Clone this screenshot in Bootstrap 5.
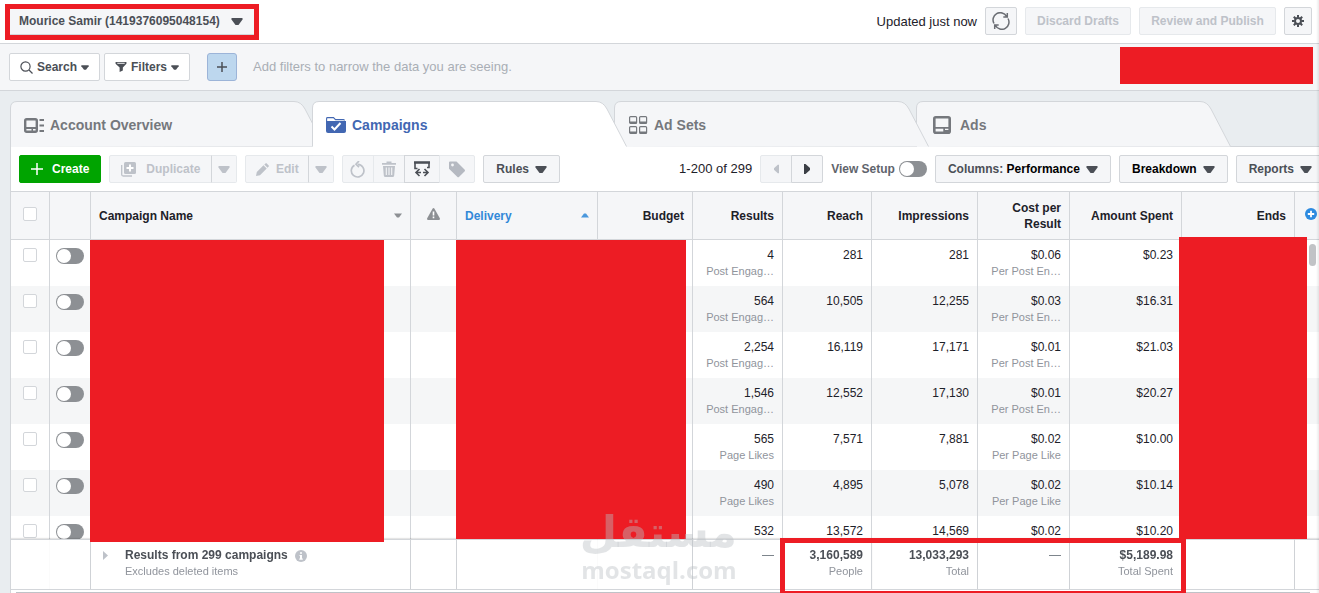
<!DOCTYPE html>
<html lang="en">
<head>
<meta charset="utf-8">
<meta name="viewport" content="width=device-width, initial-scale=1">
<title>Ads Manager - Campaigns</title>
<link href="https://cdn.jsdelivr.net/npm/bootstrap@5.3.0/dist/css/bootstrap.min.css" rel="stylesheet">
<style>
:root{--line:#d3d6da;--soft:#f5f6f8;--ink:#4b4f56;--red:#ed1c24}
body{font:12px/16px "Liberation Sans",Arial,sans-serif;color:#1d2129;background:#e9edf0}
.app{height:100vh;overflow:hidden}
.app::after{content:"";position:fixed;top:0;right:0;bottom:0;width:3px;background:linear-gradient(90deg,transparent,rgba(0,0,0,.08));pointer-events:none;z-index:20}
.fs-13{font-size:13px}
.tool{height:28px;padding:0 12px;font-size:12px;line-height:16px;font-weight:700;color:var(--ink);background:var(--soft);border:1px solid var(--line);border-radius:2px;display:inline-flex;align-items:center;justify-content:center;white-space:nowrap;flex:none}
.tool:hover{background:#ebedf0;border-color:var(--line);color:var(--ink)}
.tool:disabled{color:#bec2c9;background:var(--soft);border-color:#e6e9ec;opacity:1}
.tool svg{flex:none}
.topbar{height:44px;padding:0 7px 0 5px;border-bottom:1px solid var(--line)}
.topbar>.tool{margin-bottom:2px}
.account-pick{border:5px solid var(--red)}
.account-pick .tool{height:26px;padding:0 11px 0 9px;gap:11px;border-width:0 0 1px;border-radius:0}
.icon-only{width:32px;padding:0}
.gear{width:28px;padding:0}
.discard{width:106px}
.publish{width:137px}
.filterbar{height:47px;padding:0 6px 0 9px;background:var(--soft);border-bottom:1px solid var(--line)}
.filterbar .tool{background:#fff;padding:0 10px;gap:4px}
.filterbar .plus{width:30px;padding:0;margin:0 16px 0 13px;background:#bdd7ee;border-color:#9cb4d8;border-radius:3px}
.hint{color:#a9aeb5}
.masked{width:193px;height:37px;background:var(--red);margin-bottom:4px}
.tabs{height:55px;padding:10px 0 0 10px}
.tab-link{position:relative;width:302px;height:45px;padding:3px 0 0 14px;gap:6px;font-size:14px;font-weight:700;color:#75787d;text-decoration:none;display:flex;align-items:center;z-index:1}
.tab-link .shape{position:absolute;left:0;top:0;z-index:-1}
.tab-link.on{z-index:3;color:#4267b2}
.tab-link.mid{z-index:2}
.tab-link.last{padding:2px 0 0 16px;gap:8px}
.panel{margin-left:10px;background:#fff;border:solid var(--line);border-width:1px 0 0 1px;min-height:0}
.toolbar{height:44px;padding:0 0 0 8px;margin-right:-6px;gap:8px}
.tool.create,.tool.create:hover{background:#00a400;border-color:#00a400;color:#fff;padding:0 11px;gap:9px}
.tool.duplicate{width:103px;gap:10px}
.tool.edit{width:64px;gap:7px}
.toolbar .btn-group>.arrow{width:26px;padding:0;border-left-color:var(--line)}
.toolbar .wide{width:36px;padding:0}
.tool.gap-arrow{gap:6px}
.setup-label{color:#5f646c}
.switch{appearance:none;display:block;position:relative;width:28px;height:16px;margin:0;border-radius:8px;background:#8d9094;flex:none}
.switch::before{content:"";position:absolute;left:1px;top:1px;width:14px;height:14px;border-radius:7px;background:#fff}
.switch:checked{background:#4267b2}
.switch:checked::before{left:13px}
.tick{appearance:none;display:block;width:14px;height:14px;margin:0 auto;border:1px solid var(--line);border-radius:2px;background:#fff}
.tick:checked{background:#4267b2}
.grid-wrap{position:relative;overflow:hidden;min-height:0;border-top:1px solid var(--line)}
.report{width:100%;table-layout:fixed;border-collapse:separate;border-spacing:0;text-align:right}
.report th,.report td{padding:7px 8px 0;border-right:1px solid var(--line);vertical-align:top;white-space:nowrap}
.report tr>:last-child{border-right:0}
.report thead th{position:sticky;top:0;z-index:4;height:48px;padding:0 8px;vertical-align:middle;white-space:normal;background:var(--soft);border-bottom:1px solid var(--line)}
.report thead th.raised{padding-bottom:4px}
.report thead th.over{z-index:5}
.report thead th.add{padding-left:10px;padding-right:0}
.sorted{color:#3289d8}
.report tbody td{height:46px;color:#1d2129}
.report tbody tr:nth-child(even) td{background:#f5f6f7}
.report small{display:block;font-size:11px;color:#90949c}
.report tbody td:first-child{padding-top:8px}
.report tbody td:nth-child(2){padding:8px 0 0 6px}
.report tfoot td{position:sticky;bottom:3px;z-index:2;height:51px;padding-top:7px;background:#fff;color:var(--ink);border-top:1px solid var(--line);border-bottom:1px solid var(--line);box-shadow:0 -1px 1px rgba(0,0,0,.1),0 3px 0 #fff}
.report tfoot td.marked{z-index:5}
.report tfoot b{display:block}
.cover{position:absolute;left:-1px;top:calc(100% + 1px);background:var(--red)}
.cover.name{width:294px;height:302px}
.cover.delivery{width:230px;height:299px}
.cover.ends{left:-3px;top:calc(100% - 2px);width:128px;height:302px}
.totals-box{position:absolute;left:-3px;top:-2px;width:406px;height:55px;border:5px solid var(--red);border-bottom-width:2px;pointer-events:none}
.v-thumb{position:absolute;right:3px;top:calc(100% + 5px);width:7px;height:22px;border-radius:4px;background:#c1c3c6}
.h-thumb{position:absolute;left:5px;right:9px;bottom:0;height:1px;background:#bfc2c7;z-index:3}
.wmark{position:absolute;left:570px;bottom:11px;width:156px;color:rgba(185,190,195,.42);text-align:center;white-space:nowrap;pointer-events:none;z-index:6}
.wmark .ar{display:block;font:700 43px/52px "DejaVu Sans",sans-serif}
.wmark .en{display:block;font:700 24px/24px "Open Sans",sans-serif}
</style>
</head>
<body>
<svg class="d-none" aria-hidden="true">
  <symbol id="down" viewBox="0 0 12 7"><path d="M.5 0h11v1.500L7.500 7h-3L.5 1.500z" fill="currentColor"/></symbol>
</svg>
<div class="app d-flex flex-column">

  <header class="topbar d-flex align-items-center bg-white flex-shrink-0 gap-2">
    <div class="account-pick">
      <button type="button" class="btn tool">Mourice Samir (1419376095048154) <svg width="12" height="7"><use href="#down"/></svg></button>
    </div>
    <span class="fs-13 ms-auto">Updated just now</span>
    <button type="button" class="btn tool icon-only" aria-label="Refresh">
      <svg width="18" height="18" viewBox="0 0 18 18" fill="none" stroke="#6b6e74" stroke-width="1.500"><path d="M2 11.500A7.200 7.200 0 0 1 14.500 4.300M16 6.500A7.200 7.200 0 0 1 3.500 13.700M15.300 1v4H11.300M2.700 17v-4h4"/></svg>
    </button>
    <button type="button" class="btn tool discard" disabled>Discard Drafts</button>
    <button type="button" class="btn tool publish" disabled>Review and Publish</button>
    <button type="button" class="btn tool gear" aria-label="Settings">
      <svg width="12" height="12" viewBox="0 0 12 12" stroke="#4b4f56" fill="none" stroke-width="2"><circle cx="6" cy="6" r="3"/><path d="M6 0v2.500M6 9.500V12M0 6h2.500M9.500 6H12M1.800 1.800l1.700 1.700M8.500 8.500l1.700 1.700M10.200 1.800L8.500 3.500M3.500 8.500l-1.700 1.700"/></svg>
    </button>
  </header>

  <div class="filterbar d-flex align-items-center flex-shrink-0">
    <button type="button" class="btn tool me-1">
      <svg width="13" height="13" viewBox="0 0 13 13" fill="none" stroke="#4b4f56" stroke-width="1.200"><circle cx="5.500" cy="5.500" r="4.600"/><path d="M9 9l3.500 3.500"/></svg>
      Search <svg width="8" height="5"><use href="#down"/></svg>
    </button>
    <button type="button" class="btn tool me-1">
      <svg width="12" height="12" viewBox="0 0 13 12"><path d="M.6.6h11.800v1.800L8.500 6.500v3.400L5 11.500v-5L.6 2.400z" fill="#4b4f56"/><path d="M2.500 2h8" stroke="#fff"/></svg>
      Filters <svg width="8" height="5"><use href="#down"/></svg>
    </button>
    <button type="button" class="btn tool plus" aria-label="Add filter"><svg width="10" height="10" stroke="#4b4f56" stroke-width="1.500"><path d="M5 0v10M0 5h10"/></svg></button>
    <span class="fs-13 hint">Add filters to narrow the data you are seeing.</span>
    <div class="masked ms-auto"></div>
  </div>

  <nav class="tabs d-flex flex-shrink-0" aria-label="Levels">
    <a href="#" class="tab-link">
      <svg class="shape" width="316" height="46"><path d="M.5 46V7Q.5.500 7 .500H284Q291 .500 295 8L314.500 45.500" fill="#f5f6f8" stroke="#d3d6da"/></svg>
      <svg width="20" height="15" viewBox="0 0 20 15"><rect x="1.200" y="1.200" width="11.600" height="12.600" rx="1.500" fill="none" stroke="#75787d" stroke-width="2.400"/><path d="M2 9h10v2H2zM7.500 10H9v3H7.500zM15.500 1H20v2h-4.500zM15.500 6.500H20v2h-4.500zM15.500 12H20v2h-4.500z" fill="#75787d"/></svg>
      Account Overview
    </a>
    <a href="#" class="tab-link on" aria-current="page">
      <svg class="shape" width="316" height="46"><path d="M.5 46V7Q.5.500 7 .500H284Q291 .500 295 8L314.500 45.500V46z" fill="#fff"/><path d="M.5 45.500V7Q.5.500 7 .500H284Q291 .500 295 8L314.500 45.500" fill="none" stroke="#d3d6da"/></svg>
      <svg width="20" height="16" viewBox="0 0 20 16"><path d="M.6 5V1.500Q.6.6 1.500.6H7.500l2 2H17.500q1 0 1 1" fill="#fff" stroke="#4267b2" stroke-width="1.100"/><path d="M0 4h20v10q0 2-2 2H2q-2 0-2-2z" fill="#4267b2"/><path d="M5.500 9.500l3 3 6-6.500" fill="none" stroke="#fff" stroke-width="2"/></svg>
      Campaigns
    </a>
    <a href="#" class="tab-link mid">
      <svg class="shape" width="316" height="46"><path d="M.5 46V7Q.5.500 7 .500H284Q291 .500 295 8L314.500 45.500" fill="#f5f6f8" stroke="#d3d6da"/></svg>
      <svg width="20" height="18" viewBox="0 0 20 18" fill="none" stroke="#75787d" stroke-width="1.200"><rect x="1.600" y=".6" width="7" height="6.800" rx="1"/><rect x="11.600" y=".6" width="7" height="6.800" rx="1"/><rect x="1.600" y="10.600" width="7" height="6.800" rx="1"/><rect x="11.600" y="10.600" width="7" height="6.800" rx="1"/><path d="M2 6.500h6.500M12 6.500h6.500M2 16.500h6.500M12 16.500h6.500" stroke-width="2.200"/></svg>
      Ad Sets
    </a>
    <a href="#" class="tab-link last">
      <svg class="shape" width="316" height="46"><path d="M.5 46V7Q.5.500 7 .500H284Q291 .500 295 8L314.500 45.500" fill="#f5f6f8" stroke="#d3d6da"/></svg>
      <svg width="20" height="18" viewBox="-1 0 20 18"><rect x="1.300" y="1.300" width="15.400" height="15.400" rx="1.500" fill="none" stroke="#75787d" stroke-width="2.600"/><path d="M2 11h14v1.800H2zM10.300 12H12v4.500h-1.700zM12 14h4v2h-4z" fill="#75787d"/></svg>
      Ads
    </a>
  </nav>

  <main class="panel d-flex flex-column flex-grow-1">
    <div class="toolbar d-flex align-items-center flex-shrink-0">
      <button type="button" class="btn tool create"><svg width="12" height="12" stroke="#fff" stroke-width="1.500"><path d="M6 0v12M0 6h12"/></svg>Create</button>
      <div class="btn-group">
        <button type="button" class="btn tool duplicate" disabled><svg width="15" height="15" viewBox="0 0 15 15"><path d="M.7 3v9.500q0 1.500 1.500 1.500H11" fill="none" stroke="#bec2c9" stroke-width="1.300"/><rect x="3" y="0" width="12" height="12" rx="1.500" fill="#bec2c9"/><path d="M9 2.500v7M5.500 6h7" stroke="#fff" stroke-width="2"/></svg>Duplicate</button>
        <button type="button" class="btn tool arrow" disabled aria-label="Duplicate options"><svg width="12" height="7"><use href="#down"/></svg></button>
      </div>
      <div class="btn-group">
        <button type="button" class="btn tool edit" disabled><svg width="13" height="13" viewBox="0 0 13 13"><path d="M0 13l.8-4L7.500 2.300l3.200 3.200L4 12.200zM8.300 1.500L9.500.4q.6-.6 1.200 0l2 2q.5.600 0 1.100l-1.200 1.200z" fill="#bec2c9"/></svg>Edit</button>
        <button type="button" class="btn tool arrow" disabled aria-label="Edit options"><svg width="12" height="7"><use href="#down"/></svg></button>
      </div>
      <div class="btn-group">
        <button type="button" class="btn tool icon-only" disabled aria-label="Revert"><svg width="16" height="17" viewBox="0 0 16 17" fill="none" stroke="#bec2c9" stroke-width="1.700"><path d="M4.500 4.200A6.300 6.300 0 1 0 8 3.400"/><path d="M9 0L6 3.200 9 6.200"/></svg></button>
        <button type="button" class="btn tool icon-only" disabled aria-label="Delete"><svg width="14" height="16" viewBox="0 0 14 16" fill="#bec2c9"><path d="M0 2h4.500V.5h5V2H14v1.800H0zM1 5h12l-.8 9.500q-.2 1.500-1.500 1.500H3.300q-1.300 0-1.500-1.500z"/><path d="M4.300 6.500v7.500M7 6.500v7.500M9.700 6.500v7.500" stroke="#f5f6f8" stroke-width="1.100"/></svg></button>
        <button type="button" class="btn tool wide" aria-label="A/B test"><svg width="16" height="17" viewBox="0 0 16 17" fill="none" stroke="#4b4f56" stroke-width="1.600"><path d="M3.500 7.500H1V1.500h14v5h-2"/><path d="M0 1.500h16" stroke-width="2.400"/><path d="M2.500 11.500h4.500M9 11.500h4.500M5.500 8L2 11.500 5.500 15M10.500 8l3.500 3.500-3.500 3.500"/></svg></button>
        <button type="button" class="btn tool wide" disabled aria-label="Tags"><svg width="16" height="17" viewBox="0 0 16 17"><path d="M0 1.500Q0 .5 1 .5h6.500l8 8q1 1 0 2l-5.300 5.300q-1 1-2 0L0 7.700z" fill="#b5b9c1"/><circle cx="3.500" cy="4" r="1.400" fill="#f5f6f8"/></svg></button>
      </div>
      <button type="button" class="btn tool gap-arrow">Rules <svg width="12" height="7"><use href="#down"/></svg></button>
      <span class="fs-13 ms-auto text-nowrap">1-200 of 299</span>
      <div class="btn-group">
        <button type="button" class="btn tool icon-only" disabled aria-label="Previous page"><svg width="5" height="10" viewBox="0 0 6 10"><path d="M6 0v10H4.500L0 6V4L4.500 0z" fill="#bec2c9"/></svg></button>
        <button type="button" class="btn tool icon-only" aria-label="Next page"><svg width="6" height="10"><path d="M0 0v10h1.500L6 6V4L1.500 0z" fill="#3a3e45"/></svg></button>
      </div>
      <div class="d-flex align-items-center gap-1">
        <label for="setup" class="fw-bold text-nowrap setup-label">View Setup</label>
        <input type="checkbox" role="switch" id="setup" class="switch">
      </div>
      <button type="button" class="btn tool gap-arrow"><span>Columns: <span class="text-black">Performance</span></span> <svg width="12" height="7"><use href="#down"/></svg></button>
      <button type="button" class="btn tool gap-arrow"><span class="text-black">Breakdown</span> <svg width="12" height="7"><use href="#down"/></svg></button>
      <button type="button" class="btn tool gap-arrow">Reports <svg width="12" height="7"><use href="#down"/></svg></button>
    </div>

    <div class="grid-wrap flex-grow-1">
      <table class="report">
        <colgroup><col style="width:39px"><col style="width:41px"><col><col style="width:46px"><col style="width:141px"><col style="width:95px"><col style="width:90px"><col style="width:89px"><col style="width:106px"><col style="width:92px"><col style="width:112px"><col style="width:113px"><col style="width:24px"></colgroup>
        <thead>
          <tr>
            <th class="raised"><input type="checkbox" class="tick" aria-label="Select all"></th>
            <th></th>
            <th><div class="d-flex justify-content-between align-items-center">Campaign Name <svg width="8" height="5" viewBox="0 0 8 5"><path d="M0 .5h8L5 4.500H3z" fill="#8d9094"/></svg></div><div class="cover name"></div></th>
            <th class="text-center raised"><svg width="13" height="12" viewBox="0 0 13 12"><path d="M5.500.8q1-1.500 2 0l5.300 9.500q.6 1.700-1 1.700H1.200q-1.600 0-1-1.700z" fill="#8d9094"/><path d="M6.500 3.500v4M6.500 8.500v1.700" stroke="#fff" stroke-width="1.600"/></svg></th>
            <th class="over"><div class="d-flex justify-content-between align-items-center sorted">Delivery <svg width="8" height="5"><path d="M0 4.500h8L5 .5H3z" fill="#4a98dd"/></svg></div><div class="cover delivery"></div></th>
            <th>Budget</th><th>Results</th><th>Reach</th><th>Impressions</th><th>Cost per Result</th><th>Amount Spent</th>
            <th class="over">Ends<div class="cover ends"></div></th>
            <th class="add raised"><svg width="12" height="12" class="d-block" viewBox="0 0 12 12"><circle cx="6" cy="6" r="6" fill="#2d8be0"/><path d="M6 2.800v6.400M2.800 6h6.400" stroke="#fff" stroke-width="1.800"/></svg><div class="v-thumb"></div></th>
          </tr>
        </thead>
        <tbody>
          <tr><td><input type="checkbox" class="tick" aria-label="Select row 1"></td><td><input type="checkbox" role="switch" class="switch" aria-label="Campaign 1 on"></td><td></td><td></td><td></td><td></td><td>4<small>Post Engag…</small></td><td>281</td><td>281</td><td>$0.06<small>Per Post En…</small></td><td>$0.23</td><td></td><td></td></tr>
          <tr><td><input type="checkbox" class="tick" aria-label="Select row 2"></td><td><input type="checkbox" role="switch" class="switch" aria-label="Campaign 2 on"></td><td></td><td></td><td></td><td></td><td>564<small>Post Engag…</small></td><td>10,505</td><td>12,255</td><td>$0.03<small>Per Post En…</small></td><td>$16.31</td><td></td><td></td></tr>
          <tr><td><input type="checkbox" class="tick" aria-label="Select row 3"></td><td><input type="checkbox" role="switch" class="switch" aria-label="Campaign 3 on"></td><td></td><td></td><td></td><td></td><td>2,254<small>Post Engag…</small></td><td>16,119</td><td>17,171</td><td>$0.01<small>Per Post En…</small></td><td>$21.03</td><td></td><td></td></tr>
          <tr><td><input type="checkbox" class="tick" aria-label="Select row 4"></td><td><input type="checkbox" role="switch" class="switch" aria-label="Campaign 4 on"></td><td></td><td></td><td></td><td></td><td>1,546<small>Post Engag…</small></td><td>12,552</td><td>17,130</td><td>$0.01<small>Per Post En…</small></td><td>$20.27</td><td></td><td></td></tr>
          <tr><td><input type="checkbox" class="tick" aria-label="Select row 5"></td><td><input type="checkbox" role="switch" class="switch" aria-label="Campaign 5 on"></td><td></td><td></td><td></td><td></td><td>565<small>Page Likes</small></td><td>7,571</td><td>7,881</td><td>$0.02<small>Per Page Like</small></td><td>$10.00</td><td></td><td></td></tr>
          <tr><td><input type="checkbox" class="tick" aria-label="Select row 6"></td><td><input type="checkbox" role="switch" class="switch" aria-label="Campaign 6 on"></td><td></td><td></td><td></td><td></td><td>490<small>Page Likes</small></td><td>4,895</td><td>5,078</td><td>$0.02<small>Per Page Like</small></td><td>$10.14</td><td></td><td></td></tr>
          <tr><td><input type="checkbox" class="tick" aria-label="Select row 7"></td><td><input type="checkbox" role="switch" class="switch" aria-label="Campaign 7 on"></td><td></td><td></td><td></td><td></td><td>532</td><td>13,572</td><td>14,569</td><td>$0.02</td><td>$10.20</td><td></td><td></td></tr>
        </tbody>
        <tfoot>
          <tr>
            <td class="border-end-0"></td><td></td>
            <td class="text-start"><div class="d-flex ps-1"><svg class="mt-1 me-3" width="6" height="9"><path d="M0 0l5 4.500L0 9z" fill="#bec2c9"/></svg><div><b>Results from 299 campaigns <svg class="ms-1" width="12" height="12" viewBox="0 0 12 12"><circle cx="6" cy="6" r="6" fill="#bec2c9"/><path d="M5 2.200h2v1.600H5zM4.500 5H7v3.500h.8v1.200H4.300V8.500H5V6.100h-.5z" fill="#fff"/></svg></b><small>Excludes deleted items</small></div></div></td>
            <td></td><td class="border-end-0"></td><td></td>
            <td class="text-secondary">—</td>
            <td class="marked"><b>3,160,589</b><small>People</small><div class="totals-box"></div></td>
            <td><b>13,033,293</b><small>Total</small></td>
            <td class="text-secondary">—</td>
            <td><b>$5,189.98</b><small>Total Spent</small></td>
            <td></td><td></td>
          </tr>
        </tfoot>
      </table>
      <div class="wmark"><span class="ar" lang="ar" dir="rtl">مستقل</span><span class="en">mostaql.com</span></div>
      <div class="h-thumb"></div>
    </div>
  </main>
</div>
<script src="https://cdn.jsdelivr.net/npm/bootstrap@5.3.0/dist/js/bootstrap.bundle.min.js"></script>
</body>
</html>
